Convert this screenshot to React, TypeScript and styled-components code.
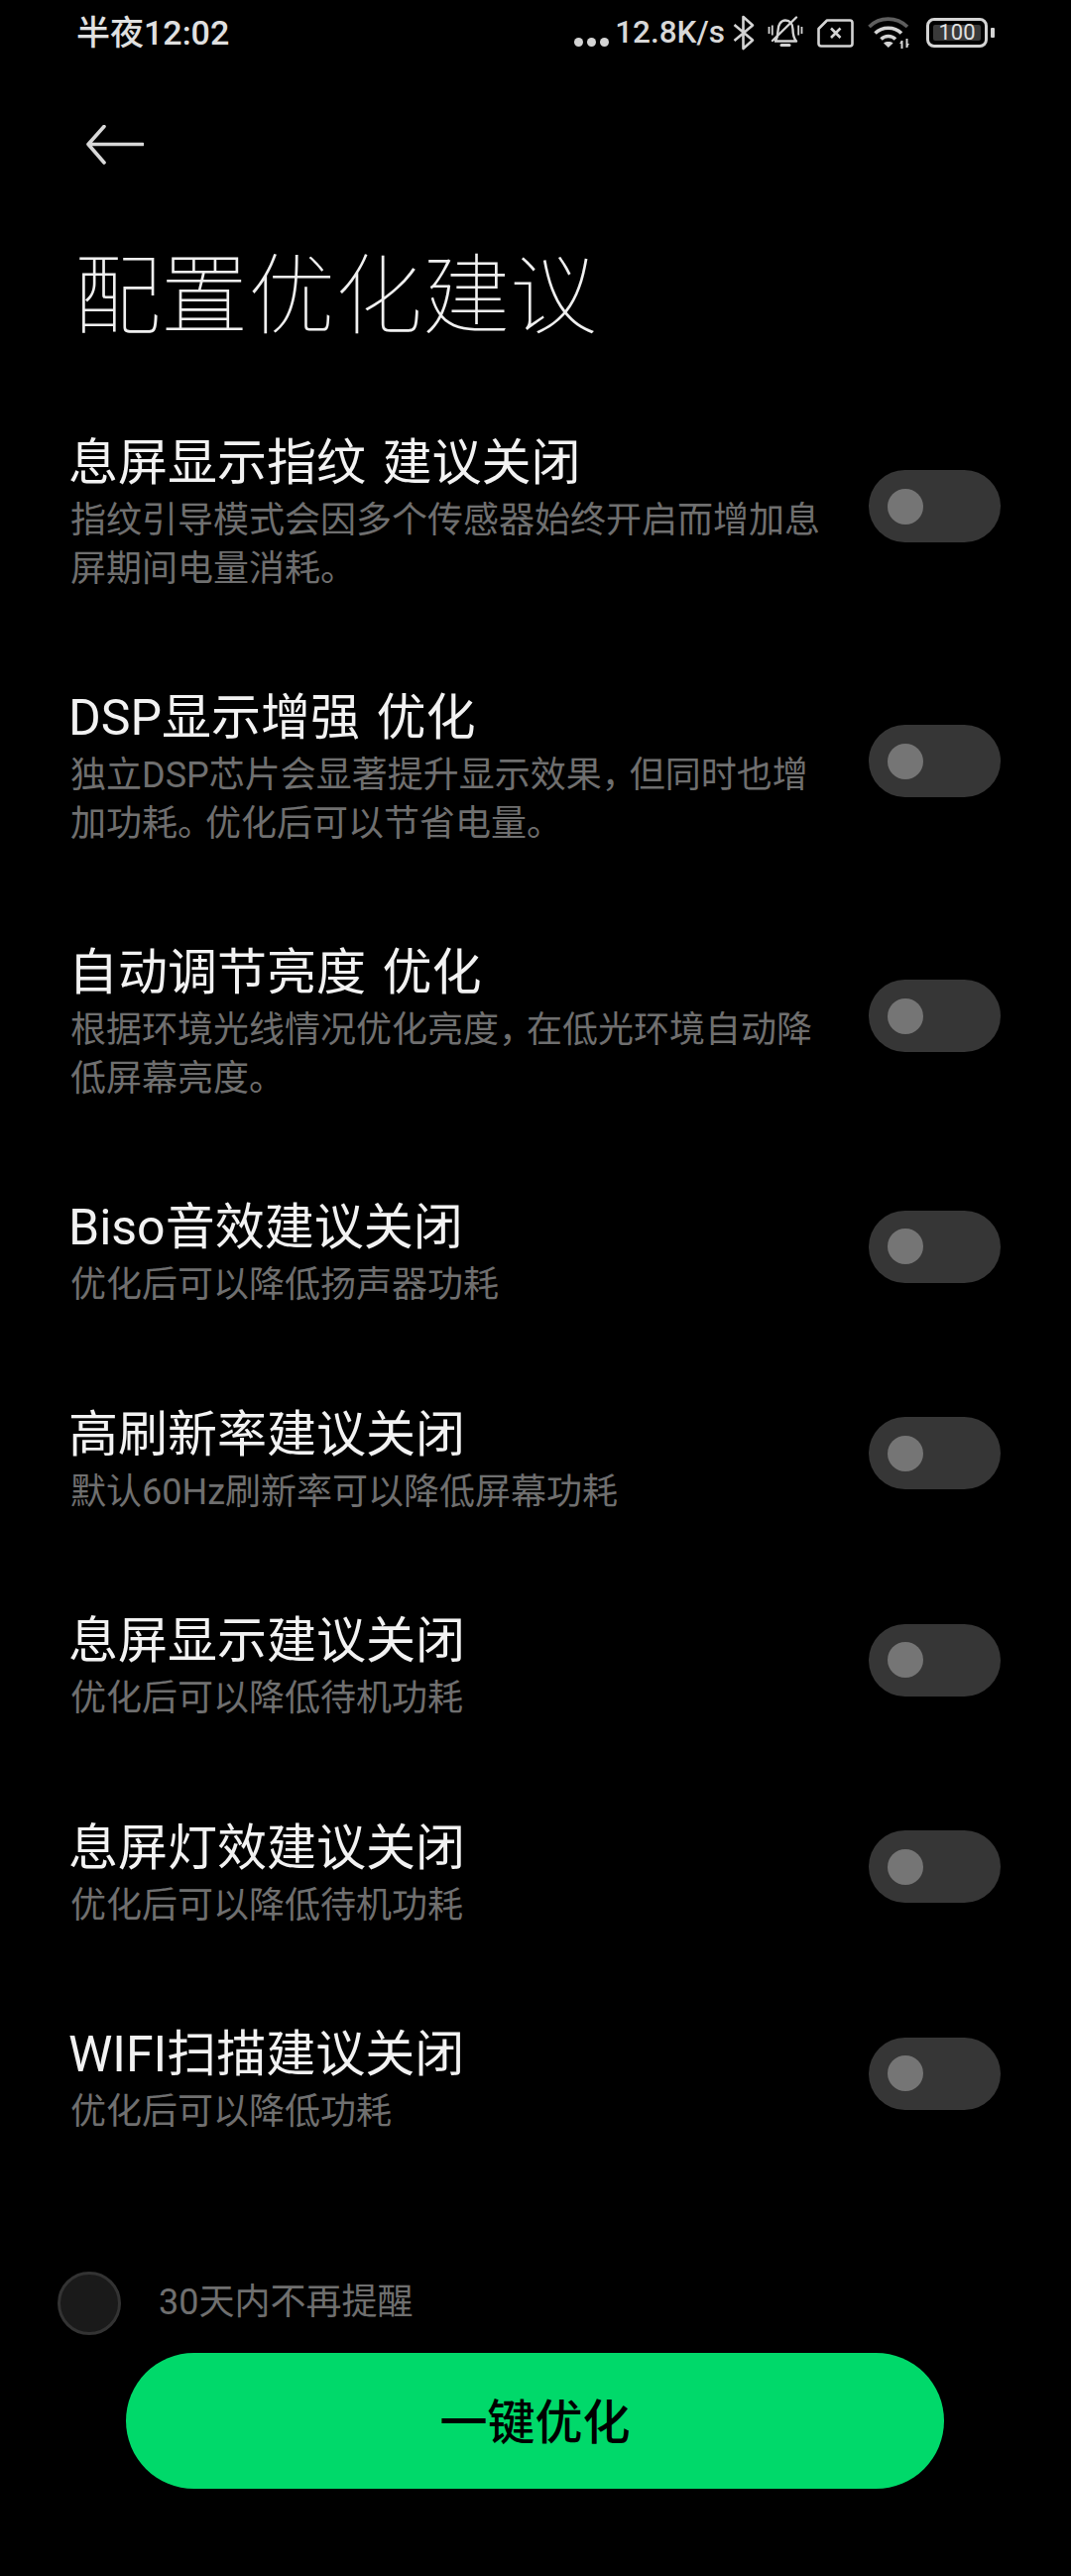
import React from 'react'
import styled, { createGlobalStyle } from 'styled-components'

const GlobalStyle = createGlobalStyle`
  html, body {
    margin: 0;
    padding: 0;
    background: #000;
  }
  body {
    font-family: Roboto, "Noto Sans CJK SC", sans-serif;
  }
`

type TSetting = { title: string; desc: string[] }

const settings: TSetting[] = [
  {
    title: '息屏显示指纹 建议关闭',
    desc: ['指纹引导模式会因多个传感器始终开启而增加息', '屏期间电量消耗。'],
  },
  {
    title: 'DSP显示增强 优化',
    desc: ['独立DSP芯片会显著提升显示效果，但同时也增', '加功耗。优化后可以节省电量。'],
  },
  {
    title: '自动调节亮度 优化',
    desc: ['根据环境光线情况优化亮度，在低光环境自动降', '低屏幕亮度。'],
  },
  { title: 'Biso音效建议关闭', desc: ['优化后可以降低扬声器功耗'] },
  { title: '高刷新率建议关闭', desc: ['默认60Hz刷新率可以降低屏幕功耗'] },
  { title: '息屏显示建议关闭', desc: ['优化后可以降低待机功耗'] },
  { title: '息屏灯效建议关闭', desc: ['优化后可以降低待机功耗'] },
  { title: 'WIFI扫描建议关闭', desc: ['优化后可以降低功耗'] },
]

// punctuation sits tighter than a full em in the reference
const renderLine = (line: string) =>
  line
    .split(/([，。])/)
    .map((part, i) =>
      i % 2 ? <StyledPunct key={i}>{part}</StyledPunct> : part,
    )

const App: React.FC = () => {
  return (
    <StyledPage>
      <GlobalStyle />
      <StatusBar />
      <StyledNav>
        <svg width="58" height="40" viewBox="0 0 58 40" fill="none">
          <path
            d="M57 19.5H3M18 1.5L2 19.5L18 38"
            stroke="#d8d8d8"
            strokeWidth="3.6"
            strokeLinecap="round"
            strokeLinejoin="round"
          />
        </svg>
      </StyledNav>
      <StyledHeading>配置优化建议</StyledHeading>
      <StyledList>
        {settings.map((s) => (
          <StyledRow key={s.title}>
            <StyledText>
              <StyledTitle>{s.title}</StyledTitle>
              {s.desc.map((line) => (
                <StyledDesc key={line}>{renderLine(line)}</StyledDesc>
              ))}
            </StyledText>
            <StyledToggle>
              <StyledKnob />
            </StyledToggle>
          </StyledRow>
        ))}
      </StyledList>
      <StyledRemind>
        <StyledRadio />
        <StyledRemindLabel>30天内不再提醒</StyledRemindLabel>
      </StyledRemind>
      <StyledAction>一键优化</StyledAction>
    </StyledPage>
  )
}

export default App

const StatusBar: React.FC = () => (
  <StyledStatus>
    <StyledTime>半夜12:02</StyledTime>
    <StyledIcons>
      <StyledDots>
        <i />
        <i />
        <i />
      </StyledDots>
      <StyledSpeed>12.8K/s</StyledSpeed>
      <svg width="22" height="36" viewBox="0 0 22 36" fill="none">
        <path
          d="M1.5 10L20 25.5L10.5 34V2L20 10.5L1.5 26"
          stroke="#d4d4d4"
          strokeWidth="2.6"
          strokeLinejoin="round"
        />
      </svg>
      <StyledBell width="36" height="34" viewBox="0 0 36 34" fill="none">
        <path
          d="M8 25C10 22 10.5 19 10.5 15C10.5 9 13.5 4.5 18 4.5C22.5 4.5 25.5 8 25.5 13.5C25.5 19 26.5 22.5 29 25.5H7"
          stroke="#d4d4d4"
          strokeWidth="2.4"
          strokeLinejoin="round"
        />
        <path d="M14 29.5H22" stroke="#d4d4d4" strokeWidth="3" strokeLinecap="round" />
        <path d="M5 25L29 1.5" stroke="#d4d4d4" strokeWidth="2.4" strokeLinecap="round" />
        <path
          d="M1.5 11V18M4.8 9.5V19.5M31.2 9.5V19.5M34.5 11V18"
          stroke="#d4d4d4"
          strokeWidth="1.8"
        />
      </StyledBell>
      <StyledIcon width="37" height="29" viewBox="0 0 37 29" fill="none">
        <path
          d="M10 1.5H33C34.4 1.5 35.5 2.6 35.5 4V25C35.5 26.4 34.4 27.5 33 27.5H4C2.6 27.5 1.5 26.4 1.5 25V10Z"
          stroke="#d4d4d4"
          strokeWidth="2.6"
          strokeLinejoin="round"
        />
        <path d="M14 9.5L23.5 19M23.5 9.5L14 19" stroke="#d4d4d4" strokeWidth="2.6" />
      </StyledIcon>
      <StyledIcon width="44" height="33" viewBox="0 0 44 33" fill="none">
        <path d="M1.5 10C12 -0.5 29 -0.5 40 10" stroke="#5e5e5e" strokeWidth="3.6" />
        <path d="M7.5 16.5C14.5 9.5 27 9.5 34 16.5" stroke="#d4d4d4" strokeWidth="3.6" />
        <path d="M13.5 22.5C17.5 18.5 24 18.5 28 22.5" stroke="#d4d4d4" strokeWidth="3.6" />
        <path d="M20.8 31L16 26.5C18.6 24.6 23 24.6 25.6 26.5Z" fill="#d4d4d4" />
        <path d="M34.5 24V32M39.5 22V31" stroke="#d4d4d4" strokeWidth="2" />
        <path d="M32 27L34.5 23.5L34.5 27ZM42 27L39.5 31L39.5 27Z" fill="#d4d4d4" />
      </StyledIcon>
      <StyledBattery>
        <StyledBatteryFill>100</StyledBatteryFill>
      </StyledBattery>
      <StyledBatteryTip />
    </StyledIcons>
  </StyledStatus>
)

const StyledPage = styled.main`
  width: 1080px;
  height: 2598px;
  background: #000;
  overflow: hidden;
  display: flex;
  flex-direction: column;
`

const StyledStatus = styled.header`
  height: 66px;
  padding: 0 77px;
  display: flex;
  align-items: center;
  justify-content: space-between;
  color: #e0e0e0;
`

const StyledTime = styled.span`
  font-size: 34px;
  font-weight: 500;
  line-height: 40px;
`

const StyledIcons = styled.div`
  display: flex;
  align-items: center;
`

const StyledIcon = styled.svg`
  margin-left: 14px;
`

const StyledBell = styled.svg`
  margin-left: 13px;
`

const StyledDots = styled.div`
  display: flex;
  gap: 4px;
  margin: 18px 6px 0 0;
  > i {
    width: 9px;
    height: 9px;
    border-radius: 50%;
    background: #d4d4d4;
  }
`

const StyledSpeed = styled.span`
  font-size: 31.5px;
  font-weight: 500;
  line-height: 36px;
  margin-right: 8px;
  color: #d8d8d8;
`

const StyledBattery = styled.div`
  box-sizing: border-box;
  width: 62px;
  height: 30px;
  margin-left: 15px;
  padding: 4px;
  border: 3px solid #d4d4d4;
  border-radius: 8px;
  display: flex;
`

const StyledBatteryFill = styled.div`
  flex: 1;
  background: #3a3a3a;
  border-radius: 2px;
  color: #e0e0e0;
  font-size: 22px;
  line-height: 16px;
  text-align: center;
`

const StyledBatteryTip = styled.div`
  width: 4px;
  height: 10px;
  margin-left: 3px;
  border-radius: 1px;
  background: #d4d4d4;
`

const StyledNav = styled.nav`
  height: 40px;
  margin-top: 60px;
  padding-left: 87px;
`

const StyledHeading = styled.h1`
  margin: 83px 0 0 74px;
  font-size: 88px;
  font-weight: 100;
  line-height: 100px;
  color: #f0f0f0;
`

const StyledList = styled.section`
  margin-top: 88px;
  padding: 0 71px;
  display: flex;
  flex-direction: column;
  gap: 96px;
`

const StyledRow = styled.article`
  display: flex;
  align-items: center;
  justify-content: space-between;
`

const StyledText = styled.div`
  width: 770px;
`

const StyledTitle = styled.h3`
  margin: 0 0 4px -2px;
  font-size: 50px;
  font-weight: 400;
  line-height: 60px;
  word-spacing: 4px;
  color: #f2f2f2;
`

const StyledDesc = styled.p`
  margin: 0;
  font-size: 36px;
  line-height: 48.5px;
  color: #6f6f6f;
`

const StyledPunct = styled.span`
  letter-spacing: -8px;
`

const StyledToggle = styled.div`
  box-sizing: border-box;
  width: 133px;
  height: 73px;
  margin-bottom: 14px;
  padding-left: 19px;
  border-radius: 37px;
  background: #363636;
  display: flex;
  align-items: center;
`

const StyledKnob = styled.span`
  width: 36px;
  height: 36px;
  border-radius: 50%;
  background: #757575;
`

const StyledRemind = styled.div`
  margin: 136px 0 0 58px;
  display: flex;
  align-items: center;
  gap: 38px;
  font-size: 36px;
  line-height: 52px;
  color: #6f6f6f;
`

const StyledRemindLabel = styled.span`
  margin-top: -1px;
`

const StyledRadio = styled.span`
  box-sizing: border-box;
  width: 64px;
  height: 64px;
  border: 3px solid #333;
  border-radius: 50%;
  background: #1a1a1a;
`

const StyledAction = styled.button`
  width: 825px;
  height: 137px;
  margin: 18px 0 0 127px;
  padding: 0 0 5px;
  border: 0;
  border-radius: 69px;
  background: #00d96a;
  color: #000;
  font-family: inherit;
  font-size: 48px;
  font-weight: 500;
`
